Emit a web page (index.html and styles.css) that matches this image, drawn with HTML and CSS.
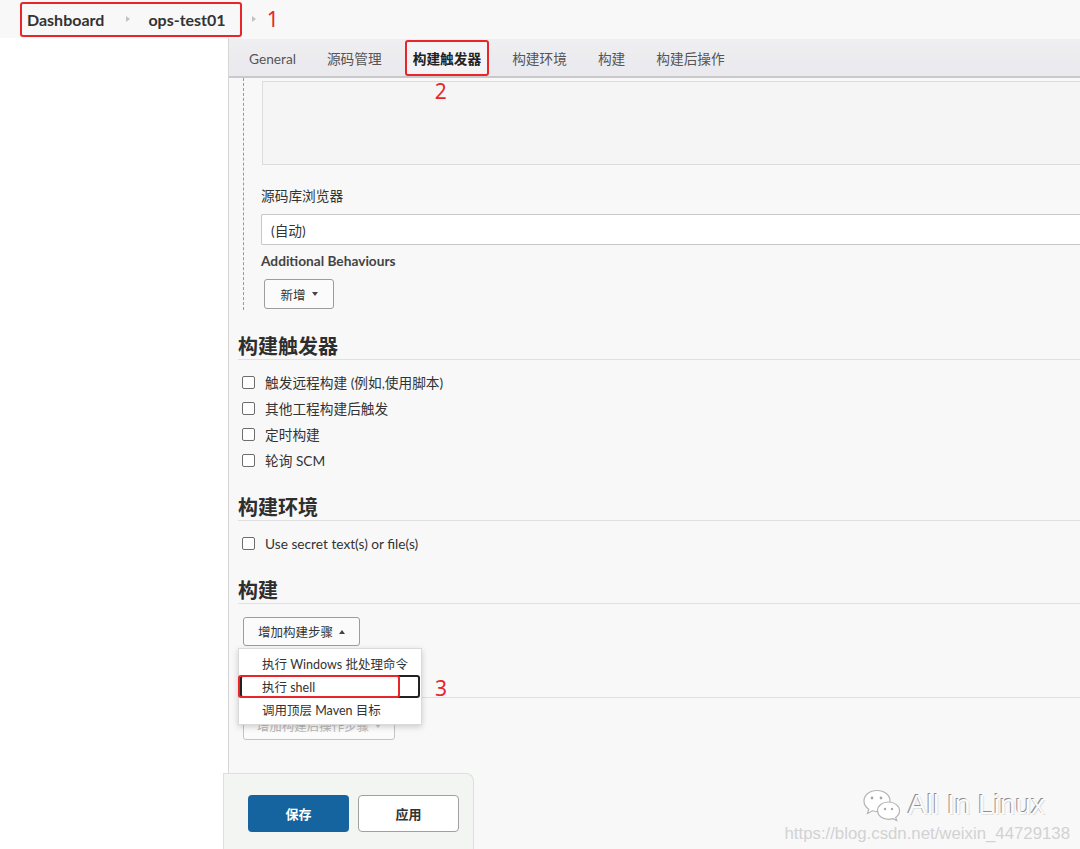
FILE: index.html
```html
<!DOCTYPE html>
<html lang="zh-CN">

<head>
     <meta charset="UTF-8">
     <meta name="viewport" content="width=device-width, initial-scale=1.0">
     <title>ops-test01 Config</title>
     <link rel="stylesheet" href="styles.css">
</head>

<body>
     <div class="topbar">
          <nav class="breadcrumbs">
               <span class="crumb">Dashboard</span>
               <span class="crumb-sep"></span>
               <span class="crumb">ops-test01</span>
          </nav>
          <span class="crumb-sep crumb-sep-out"></span>
          <span class="anno anno-1">1</span>
     </div>

     <div class="layout">
          <aside class="sidebar"></aside>

          <main class="main">
               <div class="tabbar">
                    <span class="tab">General</span>
                    <span class="tab">源码管理</span>
                    <span class="tab active">构建触发器<span class="anno anno-2">2</span></span>
                    <span class="tab">构建环境</span>
                    <span class="tab">构建</span>
                    <span class="tab">构建后操作</span>
               </div>

               <div class="content">
                    <!-- 源码管理 (scrolled) -->
                    <div class="scm">
                         <div class="scm-box"></div>
                         <div class="field-label">源码库浏览器</div>
                         <div class="select">(自动)</div>
                         <div class="sub-label">Additional Behaviours</div>
                         <button class="btn btn-add">新增 <span class="caret-down"></span></button>
                    </div>

                    <section class="section first">
                         <h2>构建触发器</h2>
                         <div class="check-list">
                              <label class="check-row"><input type="checkbox">触发远程构建 (例如,使用脚本)</label>
                              <label class="check-row"><input type="checkbox">其他工程构建后触发</label>
                              <label class="check-row"><input type="checkbox">定时构建</label>
                              <label class="check-row"><input type="checkbox">轮询 SCM</label>
                         </div>
                    </section>

                    <section class="section">
                         <h2>构建环境</h2>
                         <div class="check-list">
                              <label class="check-row"><input type="checkbox">Use secret text(s) or file(s)</label>
                         </div>
                    </section>

                    <section class="section">
                         <h2>构建</h2>
                         <div class="dropdown">
                              <button class="btn btn-step">增加构建步骤 <span class="caret-up"></span></button>
                              <ul class="menu">
                                   <li class="menu-item">执行 Windows 批处理命令</li>
                                   <li class="menu-item focused">执行 shell</li>
                                   <li class="menu-item">调用顶层 Maven 目标</li>
                                   <li class="mark-shell"></li>
                                   <li class="anno anno-3">3</li>
                              </ul>
                         </div>
                    </section>

                    <section class="section post">
                         <h2>构建后操作</h2>
                         <button class="btn btn-step btn-faded">增加构建后操作步骤 <span class="caret-down"></span></button>
                    </section>
               </div>

               <div class="savebar">
                    <button class="btn-save">保存</button>
                    <button class="btn-apply">应用</button>
               </div>
          </main>
     </div>

     <div class="watermark">
          <div class="wm-brand">
               <svg class="wm-icon" width="40" height="34" viewBox="0 0 40 34">
                    <path d="M15 2.5C22.5 2.5 28 7.2 28 13C28 18.8 22.5 23.5 15 23.5C13.3 23.5 11.7 23.3 10.3 22.8L5.5 25.5L6.8 21.2C3.9 19.3 2 16.3 2 13C2 7.2 7.5 2.5 15 2.5Z" fill="#fff" stroke="#b5b5b5" stroke-width="1.2" />
                    <circle cx="10" cy="10" r="1.4" fill="#a8a8a8" />
                    <circle cx="19" cy="10" r="1.4" fill="#a8a8a8" />
                    <path d="M26.5 14C32.8 14 37.5 18 37.5 22.8C37.5 25.5 36 27.8 33.7 29.4L34.7 32.5L31 30.6C29.6 31 28.1 31.3 26.5 31.3C20.2 31.3 15.5 27.4 15.5 22.6C15.5 17.9 20.2 14 26.5 14Z" fill="#fff" stroke="#b5b5b5" stroke-width="1.2" />
                    <circle cx="23" cy="21" r="1.2" fill="#a8a8a8" />
                    <circle cx="30" cy="21" r="1.2" fill="#a8a8a8" />
               </svg>
               <span class="wm-text">All In Linux</span>
          </div>
          <div class="wm-url">https://blog.csdn.net/weixin_44729138</div>
     </div>
</body>

</html>
```

FILE: styles.css
```css
html,
body {
     margin: 0;
     height: 100%;
     overflow: hidden;
}

body {
     font-family: Lato, "Noto Sans CJK SC", sans-serif;
     font-size: 13.7px;
     color: #333;
     background-color: #fff;
     position: relative;
}

button {
     font-family: inherit;
}

/* 顶部面包屑 */
.topbar {
     height: 38px;
     background-color: #f8f8f8;
     display: flex;
     align-items: center;
}

.breadcrumbs {
     margin-left: 20px;
     height: 35px;
     box-sizing: border-box;
     border: 2px solid #e8262a;
     border-radius: 3px;
     display: flex;
     align-items: center;
     padding: 0 14px 0 5px;
     font-size: 16px;
     font-weight: 700;
     color: #333;
}

.crumb-sep {
     width: 0;
     height: 0;
     border-left: 4px solid #c2c2c2;
     border-top: 3px solid transparent;
     border-bottom: 3px solid transparent;
     margin: 0 18px 0 22px;
}

.crumb-sep-out {
     margin: 0 0 0 10px;
}

.anno {
     color: #e8262a;
     font-family: "Noto Sans", sans-serif;
     font-size: 21px;
     font-weight: 400;
     line-height: 24px;
}

.anno-1 {
     margin-left: 11px;
}

/* 主体 */
.layout {
     display: flex;
     height: calc(100% - 38px);
}

.sidebar {
     width: 228px;
     flex: none;
     background-color: #fff;
}

.main {
     flex: 1;
     min-width: 0;
     border-left: 1px solid #d6d6d6;
     background-color: #f8f8f9;
     display: flex;
     flex-direction: column;
}

.tabbar {
     margin-top: 1px;
     height: 37px;
     background: linear-gradient(#efeff1, #e9e9ee);
     border-bottom: 2px solid #c9c9cc;
     display: flex;
     align-items: flex-end;
     padding-left: 12px;
     gap: 15px;
}

.tab {
     height: 36px;
     box-sizing: border-box;
     padding: 0 8px;
     display: flex;
     align-items: center;
     color: #555;
     white-space: nowrap;
}

.tab.active {
     position: relative;
     padding: 0 6px;
     border: 2px solid #e8262a;
     border-radius: 3px;
     color: #222;
     font-weight: 700;
     background-color: #f4f4f6;
}

.anno-2 {
     position: absolute;
     top: calc(100% + 5px);
     left: 28px;
}

.content {
     padding-left: 9px;
}

/* 源码管理 残留部分 */
.scm {
     margin-left: 5px;
     border-left: 1px dashed #999;
     padding: 3px 0 1px 17px;
}

.scm-box {
     height: 82px;
     margin-left: 1px;
     background-color: #f5f5f6;
     border: 1px solid #dcdcdc;
     border-right: none;
}

.field-label {
     margin-top: 21px;
     line-height: 20px;
}

.select {
     margin-top: 8px;
     height: 29px;
     display: flex;
     align-items: center;
     padding-left: 9px;
     background-color: #fff;
     border: 1px solid #c8c8c8;
     border-right: none;
     border-radius: 2px 0 0 2px;
}

.sub-label {
     margin-top: 6px;
     line-height: 20px;
     font-weight: 700;
     color: #444;
}

.btn {
     display: inline-flex;
     align-items: center;
     justify-content: center;
     gap: 6px;
     box-sizing: border-box;
     background-color: #fbfbfb;
     border: 1px solid #9c9c9c;
     border-radius: 3px;
     color: #333;
     font-size: 12.5px;
     padding: 0;
     white-space: nowrap;
     cursor: pointer;
}

.btn-add {
     margin: 8px 0 0 3px;
     width: 70px;
     height: 30px;
}

.caret-down,
.caret-up {
     width: 0;
     height: 0;
     border-left: 3.5px solid transparent;
     border-right: 3.5px solid transparent;
}

.caret-down {
     border-top: 4px solid #444;
}

.caret-up {
     border-bottom: 4px solid #444;
}

/* 分组 */
.section {
     margin-top: 21px;
}

.section.first {
     margin-top: 23px;
}

.section.post {
     margin-top: 25px;
}

.section h2 {
     margin: 0;
     font-size: 20px;
     line-height: 26px;
     font-weight: 700;
     color: #2e2e2e;
     border-bottom: 1px solid #e1e1e4;
}

.check-list {
     margin-top: 9px;
}

.check-row {
     height: 26px;
     display: flex;
     align-items: center;
     padding-left: 4px;
}

.check-row input {
     appearance: none;
     -webkit-appearance: none;
     width: 13px;
     height: 13px;
     margin: 0 10px 0 0;
     background-color: #fff;
     border: 1px solid #6d6d6d;
     border-radius: 2px;
}

.btn-step {
     margin: 13px 0 0 5px;
     width: 117px;
     height: 29px;
}

.btn-faded {
     width: 152px;
     color: #b8b8b8;
     border-color: #c4c4c4;
}

.btn-faded .caret-down {
     border-top-color: #c4c4c4;
}

/* 下拉菜单 */
.dropdown {
     position: relative;
     display: inline-block;
}

.menu {
     position: absolute;
     top: calc(100% + 2px);
     left: 0;
     z-index: 20;
     width: 184px;
     box-sizing: border-box;
     margin: 0;
     padding: 3px 0;
     list-style: none;
     background-color: #fff;
     border: 1px solid #dadada;
     box-shadow: 0 2px 6px rgba(0, 0, 0, 0.18);
}

.menu-item {
     height: 23px;
     box-sizing: border-box;
     margin: 0 1px;
     padding-left: 20px;
     display: flex;
     align-items: center;
     border: 2px solid transparent;
     border-radius: 3px;
     font-size: 12.5px;
     color: #333;
     white-space: nowrap;
}

.menu-item.focused {
     border-color: #222;
}

.mark-shell {
     position: absolute;
     left: -1px;
     top: 26px;
     width: 162px;
     height: 23px;
     box-sizing: border-box;
     border: 2px solid #e8262a;
     border-radius: 3px;
}

.anno-3 {
     position: absolute;
     left: 196px;
     top: 27px;
}

/* 底部保存栏 */
.savebar {
     margin-top: auto;
     margin-left: -6px;
     width: 251px;
     height: 76px;
     box-sizing: border-box;
     padding: 21px 0 0 24px;
     display: flex;
     gap: 9px;
     background-color: #f2f5f2;
     border: 1px solid #dce1dc;
     border-bottom: none;
     border-top-right-radius: 8px;
}

.btn-save,
.btn-apply {
     width: 101px;
     height: 37px;
     border-radius: 4px;
     font-size: 13px;
     font-weight: 700;
     cursor: pointer;
}

.btn-save {
     background-color: #15649f;
     border: none;
     color: #fff;
}

.btn-apply {
     background-color: #fff;
     border: 1px solid #a0a0a0;
     color: #333;
}

/* 水印 */
.watermark {
     position: absolute;
     right: 10px;
     bottom: 5px;
     display: flex;
     flex-direction: column;
     align-items: flex-end;
     pointer-events: none;
}

.wm-brand {
     display: flex;
     align-items: center;
     gap: 6px;
     margin-right: 25px;
}

.wm-text {
     font-family: "Liberation Sans", Arial, sans-serif;
     font-size: 28px;
     color: #fbfbfb;
     text-shadow: -1px -1px 0 #8f8f8f, 1px 1px 0 #e2e2e2;
}

.wm-url {
     margin-top: 2px;
     font-family: "Liberation Sans", Arial, sans-serif;
     font-size: 16.8px;
     color: #d2d2d2;
}
```
